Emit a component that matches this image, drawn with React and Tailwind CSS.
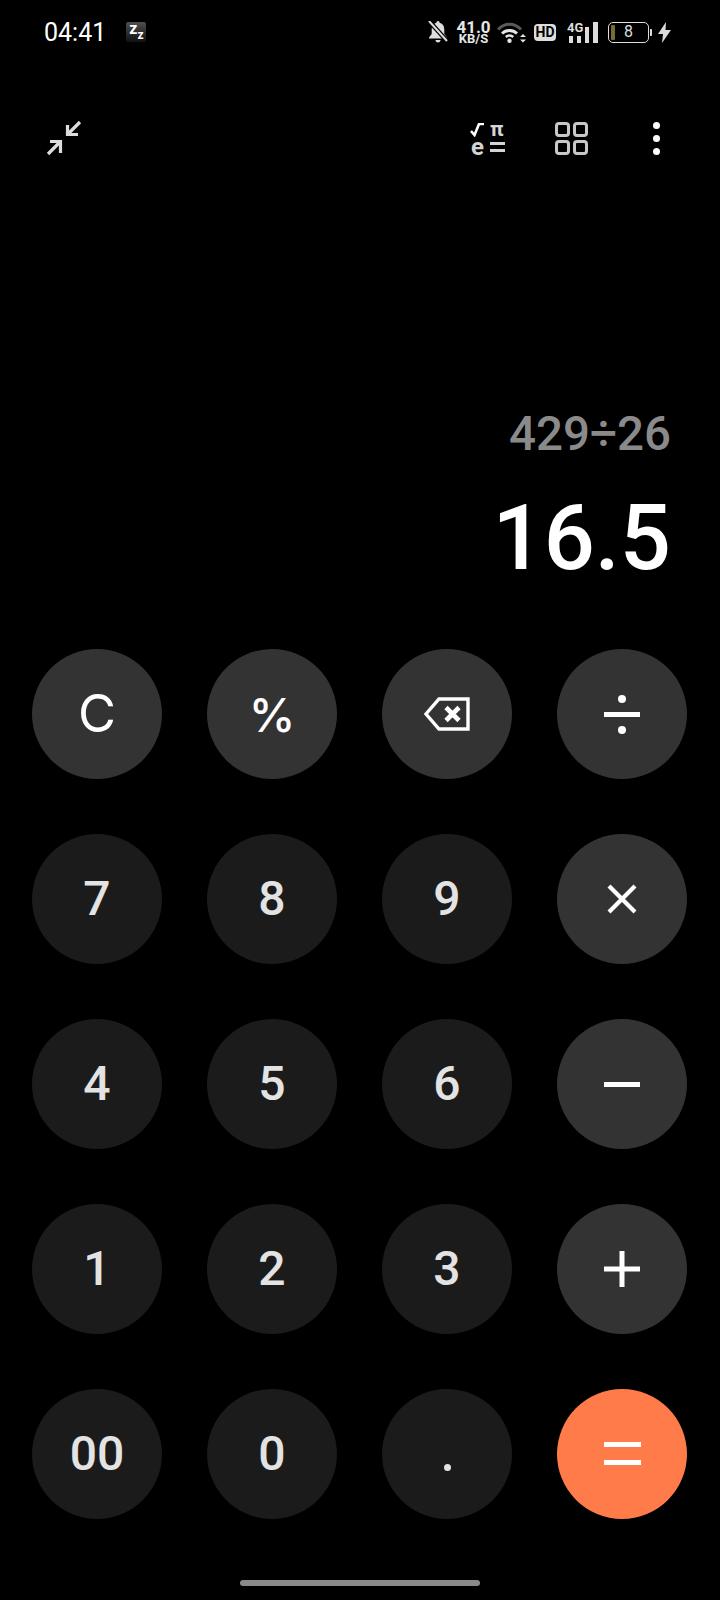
const roboto = { fontFamily: "Roboto, sans-serif" };
const inter = { fontFamily: "Inter, sans-serif" };

function CollapseIcon() {
  return (
    <svg width="36" height="36" viewBox="0 0 36 36" fill="none" stroke="#dcdcdc" strokeWidth="3.2">
      <path d="M34 2 L21 15 M21.5 5 V14.5 H32" />
      <path d="M2 34 L15 21 M4 21.5 H14.5 V33" />
    </svg>
  );
}

function MathIcon() {
  return (
    <div className="grid grid-cols-[20px_15px] grid-rows-[17px_17px] w-[35px] h-[34px] text-[#d4d4d4] font-bold leading-none">
      <svg width="15" height="14" viewBox="0 0 15 14" fill="none" className="mt-[2px]">
        <path d="M1 8 L4.5 12 L9 1 H14" stroke="#ffffff" strokeWidth="2.6" />
      </svg>
      <span className="text-[21px] leading-[16px]">π</span>
      <span className="text-[24px] leading-[18px] pl-[1px]">e</span>
      <div className="flex flex-col gap-[4px] mt-[4px]">
        <div className="h-[3px] bg-[#d4d4d4]"></div>
        <div className="h-[3px] bg-[#d4d4d4]"></div>
      </div>
    </div>
  );
}

function GridIcon() {
  return (
    <div className="grid grid-cols-2 gap-[3px] w-[33px] h-[33px]">
      <div className="border-[3.5px] border-[#c8c8c8] rounded-[4px]"></div>
      <div className="border-[3.5px] border-[#c8c8c8] rounded-[4px]"></div>
      <div className="border-[3.5px] border-[#c8c8c8] rounded-[4px]"></div>
      <div className="border-[3.5px] border-[#c8c8c8] rounded-[4px]"></div>
    </div>
  );
}

function Dots() {
  return (
    <div className="flex flex-col gap-[6px] w-[7px]">
      <div className="w-[7px] h-[7px] rounded-full bg-white"></div>
      <div className="w-[7px] h-[7px] rounded-full bg-white"></div>
      <div className="w-[7px] h-[7px] rounded-full bg-white"></div>
    </div>
  );
}

function BellOff() {
  return (
    <svg width="20" height="22" viewBox="0 0 20 22">
      <path d="M10 0 C11 0 11.6 .8 11.6 1.8 C15 2.6 16.3 5.5 16.3 9 V13 L19 16.5 V17.5 H1 V16.5 L3.7 13 V9 C3.7 5.5 5 2.6 8.4 1.8 C8.4 .8 9 0 10 0 Z" fill="#dddddd" />
      <path d="M7.5 19 H12.5 C12.5 20.5 11.4 21.5 10 21.5 C8.6 21.5 7.5 20.5 7.5 19 Z" fill="#dddddd" />
      <path d="M1 0 L19 20" stroke="#000000" strokeWidth="4.5" />
      <path d="M1 0 L19 20" stroke="#dddddd" strokeWidth="2" />
    </svg>
  );
}

function Wifi() {
  return (
    <svg width="29" height="21" viewBox="0 0 29 21" fill="none">
      <path d="M1 7.5 C7.5 0.5 17.5 0.5 24 7.5" stroke="#5a5a5a" strokeWidth="2.8" />
      <path d="M5 11.5 C9 7.5 16 7.5 20 11.5" stroke="#e6e6e6" strokeWidth="2.8" />
      <path d="M8.8 15 C10.8 13 14.2 13 16.2 15" stroke="#e6e6e6" strokeWidth="2.5" />
      <circle cx="12.5" cy="18.7" r="2.2" fill="#e6e6e6" />
      <path d="M23 15 L26 12 L29 15 Z M23 17.5 H29 L26 20.5 Z" fill="#e6e6e6" />
    </svg>
  );
}

function Bars() {
  return (
    <svg width="31" height="21" viewBox="0 0 31 21">
      <rect x="2" y="14" width="4" height="7" fill="#dddddd" />
      <rect x="10" y="14" width="4" height="7" fill="#dddddd" />
      <rect x="18" y="5" width="4" height="16" fill="#dddddd" />
      <rect x="26" y="0" width="5" height="21" fill="#dddddd" />
    </svg>
  );
}

function Backspace() {
  return (
    <svg width="46" height="34" viewBox="0 0 46 34" fill="none" stroke="#ffffff">
      <path d="M44 2 H15 L2 17 L15 32 H44 Z" strokeWidth="3.4" />
      <path d="M22 10.5 L35 23.5 M35 10.5 L22 23.5" strokeWidth="4.6" />
    </svg>
  );
}

function Divide() {
  return (
    <div className="flex flex-col items-center">
      <div className="w-[8px] h-[8px] rounded-full bg-white"></div>
      <div className="w-[36px] h-[5px] bg-white my-[9px]"></div>
      <div className="w-[8px] h-[8px] rounded-full bg-white"></div>
    </div>
  );
}

function Times() {
  return (
    <svg width="32" height="32" viewBox="0 0 32 32" stroke="#ffffff" strokeWidth="4.2">
      <path d="M3 3 L29 29 M29 3 L3 29" />
    </svg>
  );
}

function Minus() {
  return <div className="w-[36px] h-[5px] bg-white"></div>;
}

function Plus() {
  return (
    <svg width="36" height="36" viewBox="0 0 36 36" stroke="#ffffff" strokeWidth="5">
      <path d="M0 18 H36 M18 0 V36" />
    </svg>
  );
}

function Equals() {
  return (
    <div className="flex flex-col mb-[2px]">
      <div className="w-[37px] h-[5px] bg-white"></div>
      <div className="w-[37px] h-[5px] bg-white mt-[13px]"></div>
    </div>
  );
}

function Key({ kind = "num", children }) {
  const bg = kind === "op" ? "bg-[#333333]" : kind === "eq" ? "bg-[#ff7c4a]" : "bg-[#1b1b1b]";
  return (
    <div className={`w-[130px] h-[130px] rounded-full flex items-center justify-center text-[48px] font-medium leading-none text-[#e3e3e3] ${bg}`}>
      {children}
    </div>
  );
}

export default function App() {
  return (
    <div className="w-[720px] h-[1600px] bg-black text-white overflow-hidden flex flex-col" style={roboto}>
      {/* status bar */}
      <div className="h-[64px] flex items-center justify-between pl-[44px] pr-[49px]">
        <div className="flex items-center">
          <span className="text-[25px] leading-none text-white">04:41</span>
          <div className="ml-[20px] w-[20px] h-[20px] rounded-[2px] bg-gradient-to-b from-[#505050] to-[#111111] flex pl-[3px] text-white font-bold leading-none">
            <span className="text-[16px] leading-[14px]">z</span>
            <span className="text-[12px] leading-[10px] mt-[8px]">z</span>
          </div>
        </div>
        <div className="flex items-center">
          <BellOff />
          <div className="ml-[10px] w-[31px] flex flex-col items-center font-bold text-[#e6e6e6] leading-none">
            <span className="text-[17px] leading-[12px]">41.0</span>
            <span className="text-[13px] leading-[11px]">KB/S</span>
          </div>
          <div className="ml-[8px]">
            <Wifi />
          </div>
          <div className="ml-[8px] w-[22px] h-[17px] rounded-[4px] bg-[#dddddd] text-black text-[14px] font-bold leading-none flex items-center justify-center">
            HD
          </div>
          <div className="ml-[11px] relative w-[31px] h-[21px]">
            <Bars />
            <span className="absolute left-0 top-[-1px] text-[13px] font-bold leading-none text-[#dddddd]">4G</span>
          </div>
          <div className="ml-[10px] w-[41px] h-[21px] rounded-[5px] border-[1.5px] border-[#dddddd] flex items-center relative">
            <div className="absolute left-[2px] top-[2px] bottom-[2px] w-[4px] bg-[#7a6a3a] rounded-[1px]"></div>
            <span className="w-full text-center text-[16px] leading-none text-[#dddddd]">8</span>
          </div>
          <div className="ml-[1px] w-[2px] h-[7px] bg-[#dddddd] rounded-r-[1px]"></div>
          <svg className="ml-[6px]" width="13" height="21" viewBox="0 0 13 21">
            <path d="M8 0 L0 12 H5 L4 21 L13 8 H7.5 Z" fill="#dddddd" />
          </svg>
        </div>
      </div>

      {/* toolbar */}
      <div className="mt-[56px] h-[36px] flex items-center pl-[46px] pr-[60px]">
        <CollapseIcon />
        <div className="ml-auto">
          <MathIcon />
        </div>
        <div className="ml-[50px]">
          <GridIcon />
        </div>
        <div className="ml-[65px]">
          <Dots />
        </div>
      </div>

      {/* display */}
      <div className="mt-[250px] pr-[49px] flex flex-col items-end font-medium">
        <div className="text-[47.5px] leading-[56px] text-[#8a8a8a]">429÷26</div>
        <div className="mt-[24px] text-[90px] leading-[105px] text-white">16.5</div>
      </div>

      {/* keypad */}
      <div className="mt-[58px] pl-[32px] grid grid-cols-[130px_130px_130px_130px] gap-x-[45px] gap-y-[55px]">
        <Key kind="op">
          <span className="text-[52px] font-normal text-white" style={inter}>C</span>
        </Key>
        <Key kind="op">
          <span className="text-[47px] text-white" style={inter}>%</span>
        </Key>
        <Key kind="op">
          <Backspace />
        </Key>
        <Key kind="op">
          <Divide />
        </Key>
        <Key>7</Key>
        <Key>8</Key>
        <Key>9</Key>
        <Key kind="op">
          <Times />
        </Key>
        <Key>4</Key>
        <Key>5</Key>
        <Key>6</Key>
        <Key kind="op">
          <Minus />
        </Key>
        <Key>1</Key>
        <Key>2</Key>
        <Key>3</Key>
        <Key kind="op">
          <Plus />
        </Key>
        <Key>00</Key>
        <Key>0</Key>
        <Key>
          <div className="w-[7px] h-[7px] rounded-full bg-[#e3e3e3] mt-[26px]"></div>
        </Key>
        <Key kind="eq">
          <Equals />
        </Key>
      </div>

      {/* home bar */}
      <div className="mt-auto mb-[14px] mx-auto w-[240px] h-[6px] rounded-full bg-[#8a8a8a]"></div>
    </div>
  );
}
